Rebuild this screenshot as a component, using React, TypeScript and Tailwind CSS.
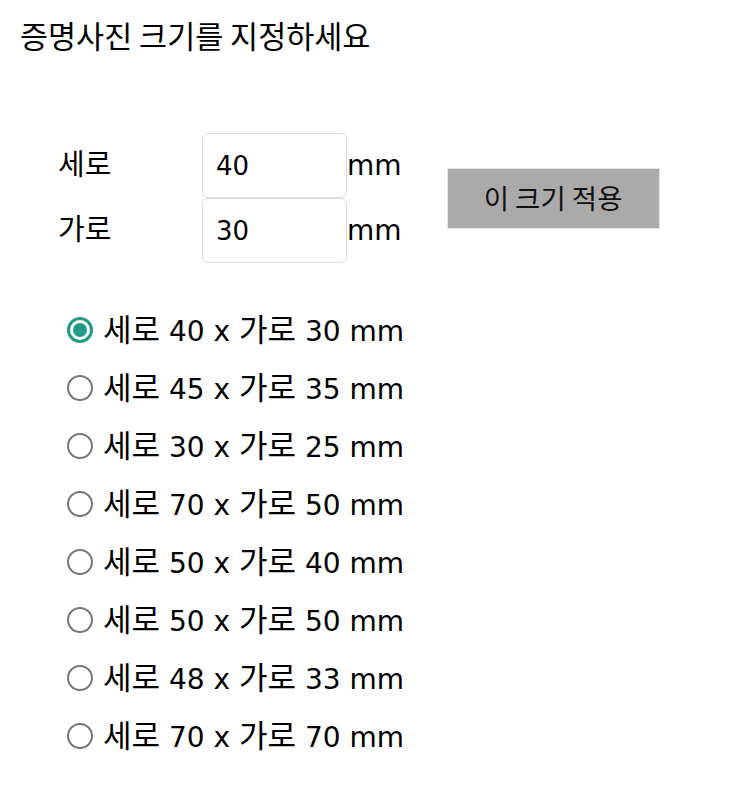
import React, { useState } from "react";

const FONT = { fontFamily: '"DejaVu Sans", "Noto Sans CJK KR", sans-serif' };
const KR = { fontFamily: '"Noto Sans CJK KR", sans-serif' };

const options = [
  [40, 30],
  [45, 35],
  [30, 25],
  [70, 50],
  [50, 40],
  [50, 50],
  [48, 33],
  [70, 70],
];

export default function App() {
  const [sel, setSel] = useState(0);
  return (
    <div className="w-[743px] min-h-[794px] bg-white text-black" style={FONT}>
      <div className="pl-5 pt-[13px]">
        <h1 className="text-[30.5px] leading-[44px] font-normal" style={KR}>
          증명사진 크기를 지정하세요
        </h1>
      </div>
      <div className="flex items-center pl-[58px] mt-[76px]">
        <div className="flex flex-col">
          <div className="flex items-baseline">
            <span className="w-[144px] text-[29px]" style={KR}>세로</span>
            <input
              defaultValue="40"
              className="w-[145px] h-[65px] border border-[#dddddd] rounded-[6px] px-[13px] text-[26px] outline-none"
              style={FONT}
            />
            <span className="text-[28px]">mm</span>
          </div>
          <div className="flex items-baseline">
            <span className="w-[144px] text-[29px]" style={KR}>가로</span>
            <input
              defaultValue="30"
              className="w-[145px] h-[65px] border border-[#dddddd] rounded-[6px] px-[13px] text-[26px] outline-none"
              style={FONT}
            />
            <span className="text-[28px]">mm</span>
          </div>
        </div>
        <button
          className="ml-[45px] w-[213px] h-[61px] bg-[#aaaaaa] border border-[#e5e5e5] text-[27.5px] text-[#111]"
          style={KR}
        >
          이 크기 적용
        </button>
      </div>
      <div className="flex flex-col pl-[67px] mt-[38px]">
        {options.map(([h, w], i) => (
          <label key={i} className="flex items-center h-[58px] cursor-pointer" onClick={() => setSel(i)}>
            {sel === i ? (
              <span className="w-[26px] h-[26px] rounded-full border-[3px] border-[#1e9a86] flex items-center justify-center">
                <span className="w-[14px] h-[14px] rounded-full bg-[#1e9a86]" />
              </span>
            ) : (
              <span className="w-[26px] h-[26px] rounded-full border-[2.5px] border-[#777777]" />
            )}
            <span className="ml-[10px] text-[28px] leading-[40px]">
              <span className="text-[31px]" style={KR}>세로</span> {h} x{" "}
              <span className="text-[31px]" style={KR}>가로</span> {w} mm
            </span>
          </label>
        ))}
      </div>
    </div>
  );
}
